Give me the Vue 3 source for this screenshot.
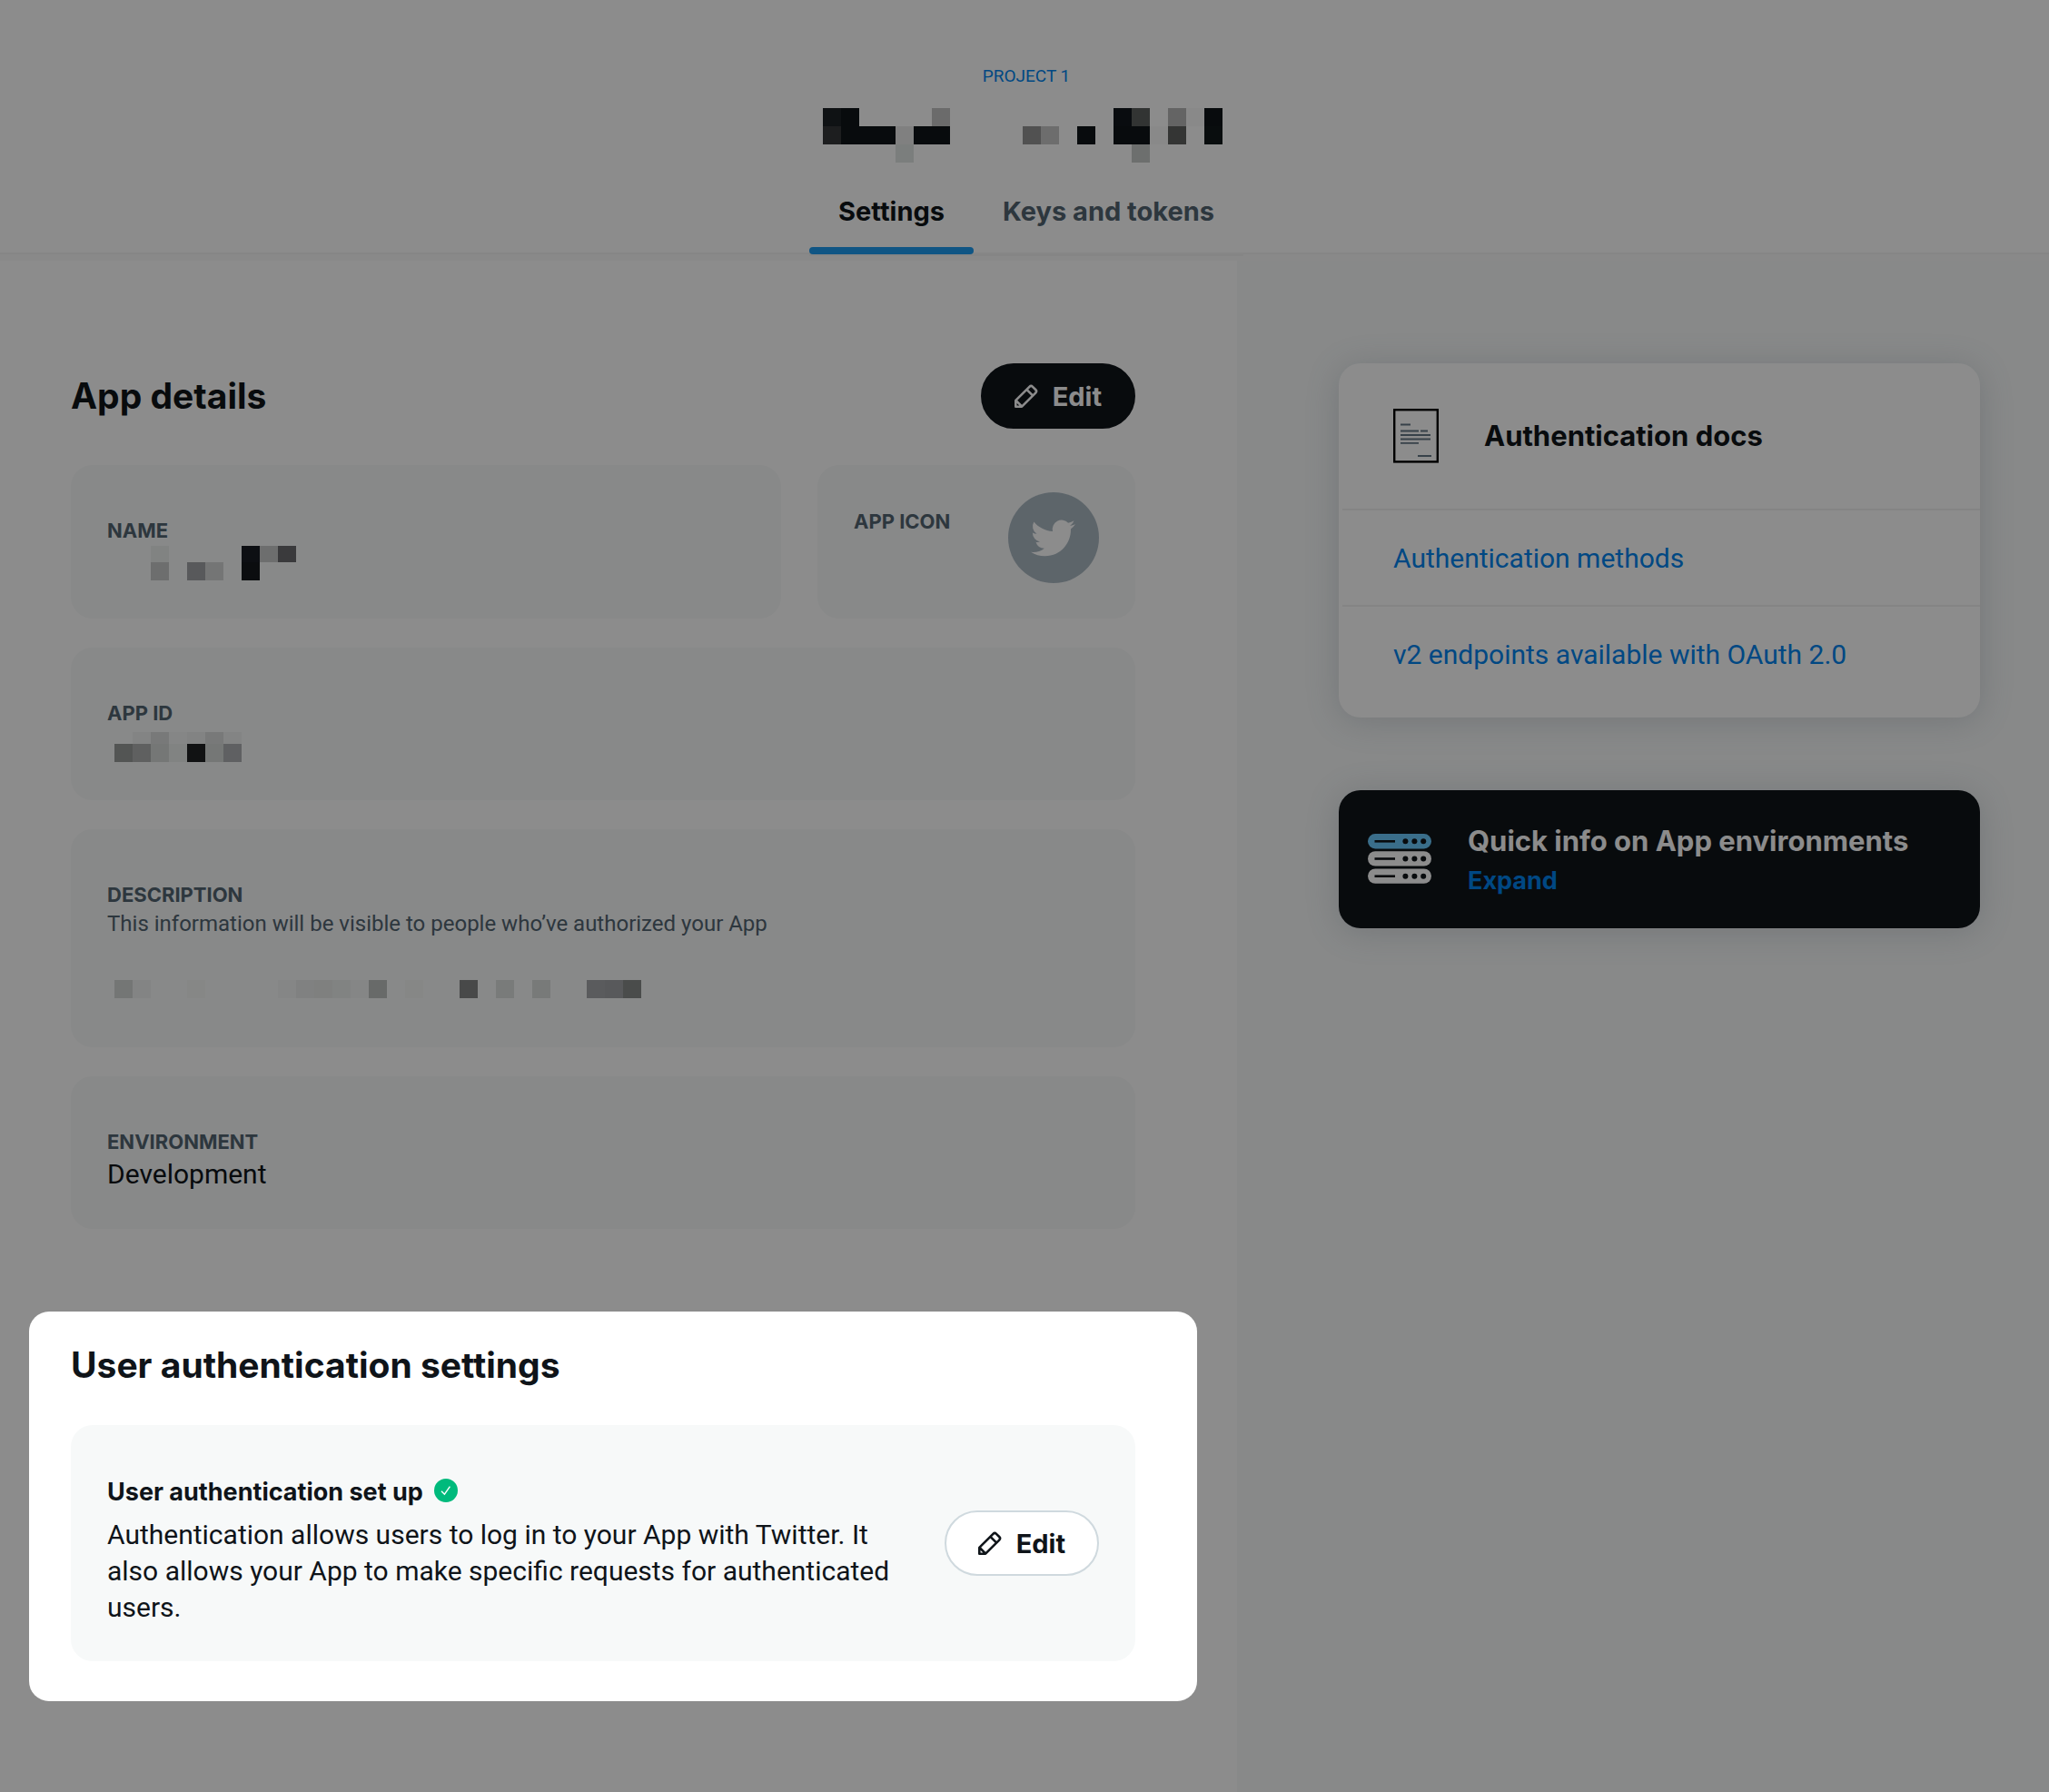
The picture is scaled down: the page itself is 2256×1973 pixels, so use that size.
<script setup>
import { ref } from 'vue'

const tabs = ['Settings', 'Keys and tokens']
const activeTab = ref('Settings')

const docLinks = ['Authentication methods', 'v2 endpoints available with OAuth 2.0']

// Redacted values: each tile is [x, y, width, height, colour].
const row = (y, h, tiles) => tiles.map(([col, color]) => [col * 20, y, 20, h, color])

const titleTiles = [
  ...row(0, 20, [[0, '#1d2126'], [1, '#0f1419'], [6, '#c4c4c4'], [16, '#12161c'], [17, '#5b5f5d'], [19, '#b6b6b6'], [20, '#f9f9f9'], [21, '#0f1419']]),
  ...row(20, 20, [[0, '#363739'], [1, '#0f1419'], [2, '#0f1419'], [3, '#0f1419'], [4, '#e9e9e9'], [5, '#0f1419'], [6, '#0f1419'], [11, '#949494'], [12, '#c6c6c6'], [14, '#0f1419'], [16, '#0f1419'], [17, '#0f1419'], [18, '#fafafa'], [19, '#5f6260'], [21, '#11181b']]),
  ...row(40, 20, [[4, '#e0e5e3'], [17, '#c6cbc9']])
]
const nameTiles = [
  ...row(0, 18, [[0, '#eceeed'], [5, '#181d23'], [6, '#c6c9c8'], [7, '#6a6a6d']]),
  ...row(18, 20, [[0, '#c6c9c8'], [2, '#a1a3a7'], [3, '#d3d6d5'], [5, '#14181c']])
]
const idTiles = [
  ...row(0, 13, [[1, '#eff1f0'], [2, '#dadddc'], [3, '#f3f5f4'], [4, '#edefee'], [5, '#dadddc'], [6, '#eff1f0']]),
  ...row(13, 20, [[0, '#989b9a'], [1, '#adb0af'], [2, '#d6d9d8'], [3, '#eceeed'], [4, '#1f2124'], [5, '#d6d9d8'], [6, '#adafb3']])
]
const descriptionTiles = row(0, 20, [
  [0, '#d4d8d6'], [1, '#eff1f0'], [4, '#f4f6f5'], [9, '#f3f5f4'], [10, '#eaeceb'], [11, '#e7e9e8'], [12, '#eceeed'], [13, '#f3f5f4'],
  [14, '#bec2c0'], [16, '#f4f6f5'], [19, '#838685'], [21, '#dde1df'], [23, '#dbdfdd'], [26, '#a4a6aa'], [27, '#a0a3a7'], [28, '#878a89']
])
</script>

<template>
  <div class="page">
    <header class="top">
      <a class="project" href="#">PROJECT 1</a>
      <svg class="app-title" viewBox="0 0 440 60" role="img" aria-label="App name">
        <rect v-for="(t, i) in titleTiles" :key="i" :x="t[0]" :y="t[1]" :width="t[2]" :height="t[3]" :fill="t[4]" />
      </svg>
      <nav class="tabs">
        <a v-for="tab in tabs" :key="tab" href="#" class="tab" :class="{ active: tab === activeTab }" @click.prevent="activeTab = tab">{{ tab }}</a>
      </nav>
    </header>
    <div class="rule"></div>

    <div class="body">
      <main class="main">
        <section class="details">
          <div class="section-head">
            <h2>App details</h2>
            <button class="edit dark" type="button">
              <svg viewBox="0 0 26 26" class="pencil"><path d="M1.3 24.7V17.9L16.4 2.8Q18.2 1 20 2.8L23.2 6Q25 7.8 23.2 9.6L8.1 24.7ZM13.4 5.8L20.2 12.6M1.6 18L8 24.4" /></svg>
              <span>Edit</span>
            </button>
          </div>

          <div class="cards">
            <div class="pair">
              <div class="card name">
                <h3>NAME</h3>
                <svg class="tiles indent" width="160" height="38" role="img" aria-label="Hidden name">
                  <rect v-for="(t, i) in nameTiles" :key="i" :x="t[0]" :y="t[1]" :width="t[2]" :height="t[3]" :fill="t[4]" />
                </svg>
              </div>
              <div class="card app-icon">
                <h3>APP ICON</h3>
                <svg class="avatar" viewBox="0 0 100 100">
                  <circle cx="50" cy="50" r="50" fill="#aab8c2" />
                  <path transform="translate(25 26) scale(2.04)" fill="#fff" d="M23.95 4.57a10 10 0 0 1-2.82.77 4.96 4.96 0 0 0 2.16-2.72c-.95.55-2 .95-3.13 1.18a4.92 4.92 0 0 0-8.38 4.48C7.69 8.1 4.07 6.13 1.64 3.16a4.92 4.92 0 0 0 1.52 6.57 4.9 4.9 0 0 1-2.23-.61v.06a4.92 4.92 0 0 0 3.95 4.83 5 5 0 0 1-2.21.08 4.94 4.94 0 0 0 4.6 3.42A9.87 9.87 0 0 1 0 19.54a13.99 13.99 0 0 0 7.55 2.21c9.05 0 14-7.5 14-13.98 0-.21 0-.42-.02-.63a9.94 9.94 0 0 0 2.46-2.55z" />
                </svg>
              </div>
            </div>

            <div class="card">
              <h3>APP ID</h3>
              <svg class="tiles" width="140" height="33" role="img" aria-label="Hidden app ID">
                <rect v-for="(t, i) in idTiles" :key="i" :x="t[0]" :y="t[1]" :width="t[2]" :height="t[3]" :fill="t[4]" />
              </svg>
            </div>

            <div class="card">
              <h3>DESCRIPTION</h3>
              <p class="hint">This information will be visible to people who’ve authorized your App</p>
              <svg class="tiles spaced" width="580" height="20" role="img" aria-label="Hidden description">
                <rect v-for="(t, i) in descriptionTiles" :key="i" :x="t[0]" :y="t[1]" :width="t[2]" :height="t[3]" :fill="t[4]" />
              </svg>
            </div>

            <div class="card">
              <h3>ENVIRONMENT</h3>
              <p>Development</p>
            </div>
          </div>
        </section>

        <section class="spotlight">
          <h2>User authentication settings</h2>
          <div class="card auth">
            <div class="auth-text">
              <h4>
                <span>User authentication set up</span>
                <svg class="check" viewBox="0 0 26 26"><circle cx="13" cy="13" r="13" fill="#00ba7c" /><path d="M8 13.8L11.4 17.2L17.4 8.6" fill="none" stroke="#fff" stroke-width="1.4" /></svg>
              </h4>
              <p>Authentication allows users to log in to your App with Twitter. It also allows your App to make specific requests for authenticated users.</p>
            </div>
            <button class="edit light" type="button">
              <svg viewBox="0 0 26 26" class="pencil"><path d="M1.3 24.7V17.9L16.4 2.8Q18.2 1 20 2.8L23.2 6Q25 7.8 23.2 9.6L8.1 24.7ZM13.4 5.8L20.2 12.6M1.6 18L8 24.4" /></svg>
              <span>Edit</span>
            </button>
          </div>
        </section>
      </main>

      <aside class="side">
        <section class="panel docs">
          <div class="docs-head">
            <svg class="doc" viewBox="0 0 50 60">
              <rect x="1.2" y="1.2" width="47.6" height="57.2" fill="none" stroke="#000" stroke-width="2.4" />
              <path d="M8 17.5h11M8 24.5h20M30 24.5h8M8 29h33M8 33.5h33M8 37.8h20M27 52h15" stroke="#657786" stroke-width="1.8" />
            </svg>
            <h3>Authentication docs</h3>
          </div>
          <ul>
            <li v-for="link in docLinks" :key="link"><a href="#">{{ link }}</a></li>
          </ul>
        </section>

        <section class="panel info">
          <svg class="servers" viewBox="0 0 70 55">
            <g v-for="n in 3" :key="n">
              <rect x="0" :y="(n - 1) * 19.2" width="70" height="16.4" rx="8.2" :fill="n === 1 ? '#6bc9fb' : '#fff'" />
              <rect x="7.5" :y="(n - 1) * 19.2 + 7" width="22.5" height="2.6" fill="#0f1419" />
              <circle v-for="x in [41.4, 51.4, 61.2]" :key="x" :cx="x" :cy="(n - 1) * 19.2 + 8.3" r="3" fill="#0f1419" />
            </g>
          </svg>
          <div>
            <h3>Quick info on App environments</h3>
            <button class="expand" type="button">Expand</button>
          </div>
        </section>
      </aside>
    </div>
  </div>
</template>

<style>
body {
  margin: 0;
}
</style>

<style scoped>
.page {
  min-height: 100vh;
  display: flex;
  flex-direction: column;
  overflow: hidden;
  background: #fff;
  color: #0f1419;
  font-family: Roboto, "Liberation Sans", sans-serif;
  font-size: 30px;
  line-height: 40px;
}

h2,
h3,
h4,
p,
ul {
  margin: 0;
  padding: 0;
}

h2,
h3,
h4,
button,
.tab {
  font-family: Inter, "Liberation Sans", sans-serif;
  font-weight: 700;
}

a {
  color: #0084ee;
  text-decoration: none;
}

button {
  cursor: pointer;
}

svg {
  display: block;
  flex: none;
}

.top {
  display: flex;
  flex-direction: column;
  align-items: center;
  padding: 70px 0 0 4px;
}

.project {
  font-size: 19px;
  line-height: 28px;
}

.app-title {
  width: 440px;
  height: 60px;
  margin-top: 21px;
  margin-right: 8px;
}

.tabs {
  position: relative;
  display: flex;
  margin-top: 14px;
  margin-bottom: -4px;
  border-bottom: 2px solid #f3f3f3;
}

.tab {
  position: relative;
  padding: 20px 32px 27px;
  color: #536471;
  font-size: 29px;
}

.tab.active {
  color: #0f1419;
}

.tab.active::after {
  content: "";
  position: absolute;
  left: 0;
  right: 0;
  bottom: 0;
  height: 8px;
  border-radius: 4px;
  background: #1d9bf0;
}

.rule {
  height: 7px;
  border-top: 2px solid #f5f5f5;
  background: #f9f9f9;
}

.body {
  flex: 1;
  display: grid;
  grid-template-columns: 1362fr 894fr;
}

.main {
  padding: 113px 44px 100px 32px;
}

.details {
  padding: 0 68px 0 46px;
}

.section-head {
  display: flex;
  justify-content: space-between;
  align-items: center;
  margin-bottom: 40px;
}

h2 {
  font-size: 39px;
  line-height: 48px;
}

.edit {
  flex: none;
  display: flex;
  align-items: center;
  gap: 16px;
  height: 72px;
  padding: 0 35px;
  border: 2px solid #0f1419;
  border-radius: 36px;
  font-size: 29px;
}

.edit.dark {
  background: #0f1419;
  color: #fff;
}

.edit.light {
  border-color: #cfd9de;
  background: #fff;
  color: #0f1419;
}

.pencil {
  width: 26px;
  height: 26px;
  fill: none;
  stroke: currentColor;
  stroke-width: 2.6;
  stroke-linejoin: round;
}

.cards {
  display: flex;
  flex-direction: column;
  gap: 32px;
}

.pair {
  display: grid;
  grid-template-columns: 782fr 350fr;
  gap: 40px;
}

.card {
  padding: 56px 40px 40px;
  border-radius: 24px;
  background: #f7f9f9;
}

.card h3 {
  color: #536471;
  font-size: 22px;
  line-height: 32px;
}

.app-icon {
  display: flex;
  justify-content: space-between;
  padding: 30px 40px 39px;
}

.app-icon h3 {
  padding-top: 16px;
}

.avatar {
  width: 100px;
  height: 100px;
}

.tiles {
  margin: 5px 0 2px 8px;
}

.tiles.indent {
  margin: 1px 0 1px 48px;
}

.tiles.spaced {
  margin: 46px 0 14px 8px;
}

.hint {
  color: #536471;
  font-size: 24px;
  line-height: 32px;
}

.spotlight {
  position: relative;
  z-index: 1;
  margin-top: 91px;
  padding: 35px 68px 44px 46px;
  border-radius: 22px;
  background: #fff;
  box-shadow: 0 0 0 4000px rgba(0, 0, 0, 0.45);
}

.spotlight h2 {
  margin-bottom: 42px;
}

.auth {
  display: flex;
  align-items: center;
  gap: 40px;
  padding: 0 40px;
}

.auth-text {
  flex: 1;
  padding: 56px 0 39px;
}

h4 {
  display: flex;
  align-items: center;
  gap: 12px;
  margin-bottom: 9px;
  font-size: 27px;
  line-height: 36px;
}

.check {
  width: 26px;
  height: 26px;
  margin-bottom: 4px;
}

.side {
  padding: 113px 76px 0 112px;
  background: #f7f9f9;
}

.panel {
  border-radius: 24px;
  box-shadow: 0 4px 36px rgba(101, 119, 134, 0.24);
}

.panel h3 {
  font-size: 31px;
  line-height: 44px;
}

.docs {
  padding: 0 0 18px 4px;
  background: #fff;
}

.docs-head {
  display: flex;
  align-items: center;
  gap: 50px;
  height: 160px;
  padding-left: 56px;
}

.doc {
  width: 50px;
  height: 60px;
}

ul {
  list-style: none;
}

li {
  padding: 33px 56px 31px;
  border-top: 2px solid #f0f1f1;
}

.info {
  display: flex;
  align-items: center;
  gap: 40px;
  margin-top: 80px;
  padding: 34px 32px 30px;
  background: #0f1419;
  color: #fff;
}

.servers {
  width: 70px;
  height: 55px;
  margin-bottom: 5px;
}

.expand {
  display: block;
  padding: 0;
  border: 0;
  background: none;
  color: #0084ee;
  font-size: 27px;
  line-height: 44px;
}
</style>
